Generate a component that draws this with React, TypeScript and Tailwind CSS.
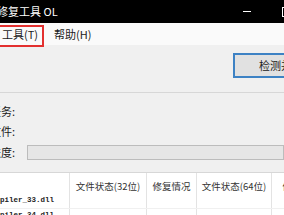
export default function App() {
  const cols = ["", "文件状态(32位)", "修复情况", "文件状态(64位)", "修复情况"];
  const rows = ["d3dcompiler_33.dll", "d3dcompiler_34.dll"];

  return (
    <div className="w-[284px] h-[215px] overflow-hidden bg-[#f0f0f0] font-['Noto_Sans_CJK_SC',sans-serif] text-[#1a1a1a]">
      {/* Title bar */}
      <div className="h-[23px] bg-black flex items-center text-white text-[11px] leading-none">
        <span className="-ml-[3px] whitespace-nowrap">修复工具 OL</span>
        <div className="ml-auto -mr-[8px] flex items-center gap-[31px]">
          <span className="w-[8px] h-px bg-white" />
          <span className="w-[10px] h-[10px] border border-white" />
        </div>
      </div>

      {/* Menu bar */}
      <div className="relative h-[22px] bg-[#fafafa] flex items-center text-[11px] leading-none">
        <span className="pl-[2px] whitespace-nowrap">工具(T)</span>
        <span className="ml-[16px] whitespace-nowrap">帮助(H)</span>
        {/* highlight annotation */}
        <div className="absolute -left-[2px] top-[2px] w-[46px] h-[22px] border-2 border-[#e3302f]" />
      </div>

      {/* Toolbar */}
      <div className="h-[48px] border-b border-[#d7d7d7] flex pt-[8px]">
        <button className="ml-[233px] shrink-0 w-[107px] h-[25px] bg-[#e1e1e1] border-2 border-[#3d82c4] text-[11px] leading-none text-[#1a1a1a]">
          检测并修复
        </button>
      </div>

      {/* Form */}
      <div className="h-[80px] border-b border-[#d7d7d7] flex flex-col pt-[8px] text-[11px] leading-none">
        <div className="h-[20px] flex items-center">
          <div className="w-[15px] flex justify-end whitespace-nowrap">任务:</div>
        </div>
        <div className="h-[20px] flex items-center">
          <div className="w-[15px] flex justify-end whitespace-nowrap">文件:</div>
        </div>
        <div className="mt-[4px] h-[15px] flex items-center">
          <div className="w-[15px] flex justify-end whitespace-nowrap">进度:</div>
          <div className="ml-[12px] flex-1 h-[15px] bg-[#e6e6e6] border border-[#bcbcbc]" />
        </div>
      </div>

      {/* File list */}
      <div className="bg-white h-[60px]">
        <div className="grid grid-cols-[70px_77px_50px_75px_60px] h-[21px] text-[9.5px] leading-none text-[#333]">
          {cols.map((c, i) => (
            <div
              key={i}
              className="border-r border-[#e3e3e3] flex justify-center items-center pt-[6px] whitespace-nowrap"
            >
              {c}
            </div>
          ))}
        </div>
        {rows.map((r) => (
          <div
            key={r}
            className="grid grid-cols-[70px_77px_50px_75px_60px] h-[15px] border-b border-[#f0f0f0] text-[7.5px] leading-none"
          >
            <div className="border-r border-[#e3e3e3] flex justify-end items-center pr-[15px] whitespace-nowrap font-['Liberation_Mono',monospace] font-semibold text-[#222]">
              {r}
            </div>
            <div className="border-r border-[#e3e3e3]" />
            <div className="border-r border-[#e3e3e3]" />
            <div className="border-r border-[#e3e3e3]" />
            <div className="border-r border-[#e3e3e3]" />
          </div>
        ))}
      </div>
    </div>
  );
}
